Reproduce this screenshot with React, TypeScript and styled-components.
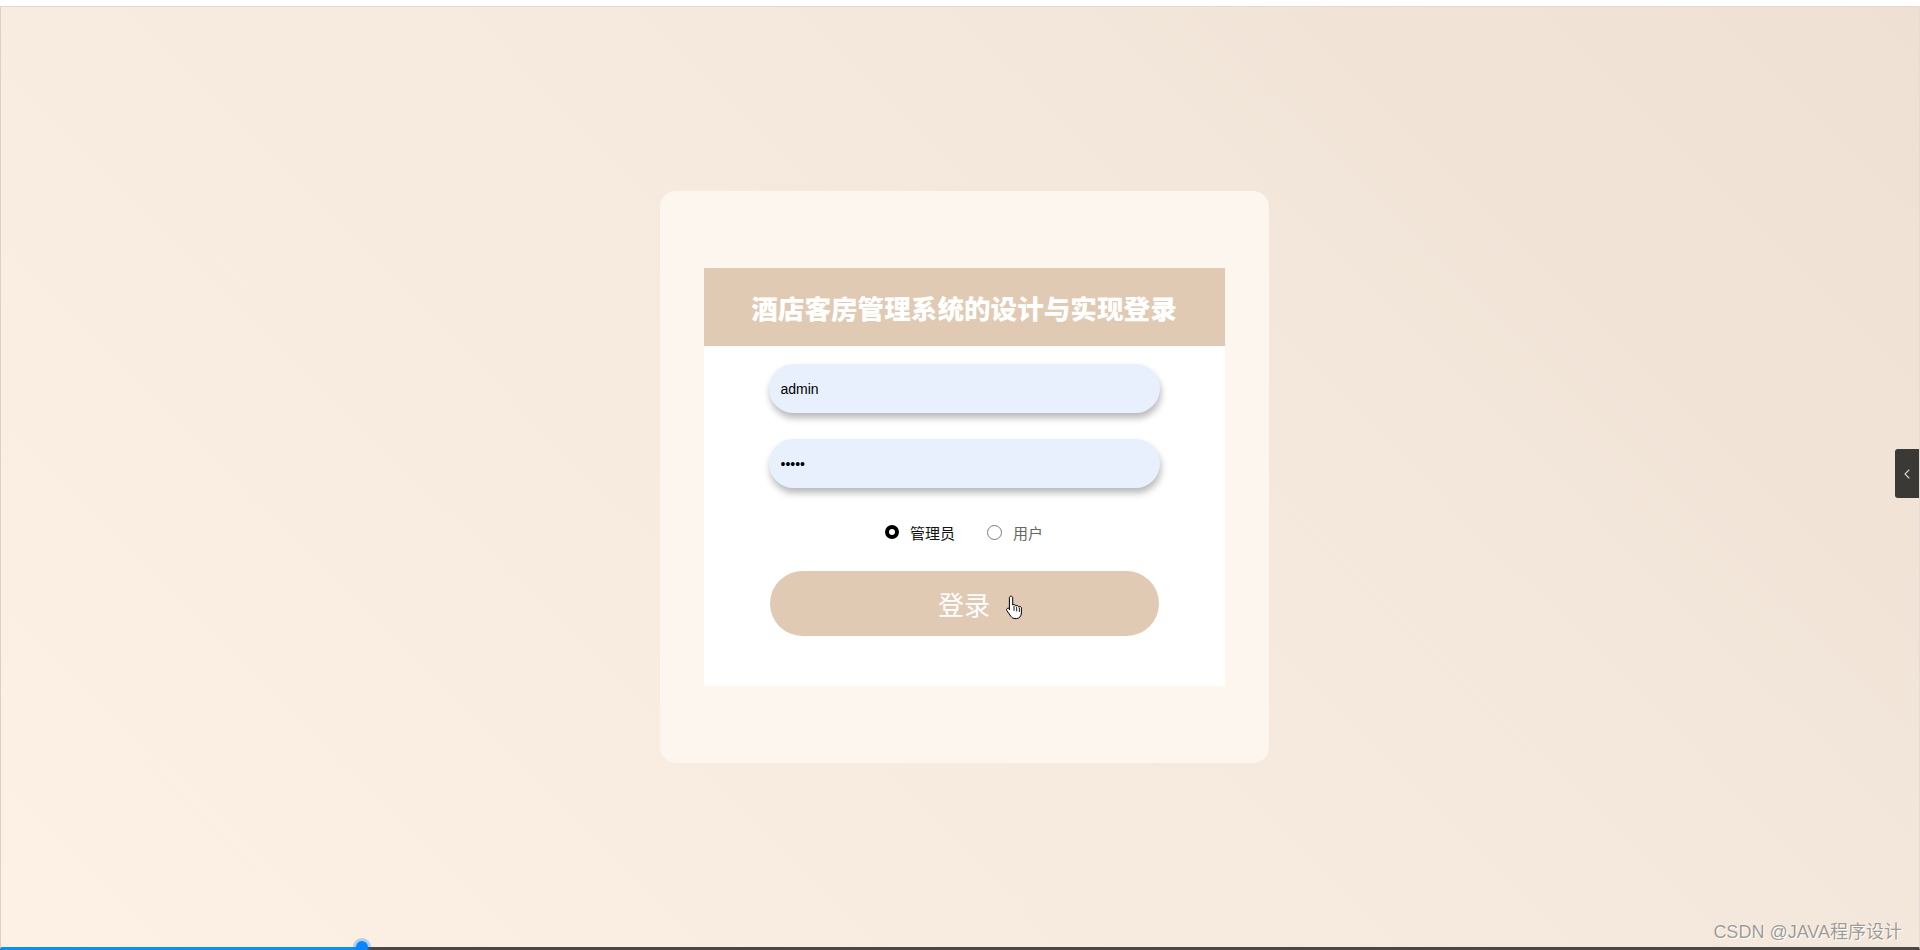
import React from "react";
import styled, { createGlobalStyle } from "styled-components";
import { ChevronLeft } from "lucide-react";

const GlobalStyle = createGlobalStyle`
  html, body {
    margin: 0;
    padding: 0;
    height: 100%;
    background: #ffffff;
    font-family: "Liberation Sans", "Noto Sans CJK SC", sans-serif;
  }
  * { box-sizing: border-box; }
`;

const Page = styled.div`
  height: 950px;
  display: flex;
  flex-direction: column;
  overflow: hidden;
`;

const TopStrip = styled.div`
  height: 7px;
  flex: none;
  background: #ffffff;
  border-bottom: 1px solid #dedad6;
`;

const Stage = styled.div`
  position: relative;
  flex: 1;
  display: flex;
  align-items: center;
  justify-content: center;
  border-left: 1px solid #d9d2ca;
  border-right: 1px solid #e4ddd5;
  border-bottom: 3px solid #4a4846;
  background: linear-gradient(45deg, #fdf1e5 0%, #f6eadf 50%, #eee0d2 100%);
`;

const Card = styled.div`
  width: 609px;
  height: 572px;
  margin-left: 8px;
  border-radius: 16px;
  background: #fdf6ef;
  display: flex;
  align-items: center;
  justify-content: center;
`;

const Panel = styled.div`
  width: 521px;
  background: #ffffff;
  display: flex;
  flex-direction: column;
  padding-bottom: 50px;
`;

const Header = styled.div`
  height: 78px;
  background: #e0cab3;
  display: flex;
  align-items: center;
  justify-content: center;
`;

const Title = styled.h1`
  margin: 0;
  font-family: "Noto Sans CJK SC", "Liberation Sans", sans-serif;
  font-size: 26.6px;
  font-weight: 900;
  color: #ffffff;
  letter-spacing: 0;
`;

const Form = styled.form`
  display: flex;
  flex-direction: column;
  align-items: center;
  padding-top: 18px;
  margin: 0;
`;

const Input = styled.input<{ $gap?: number }>`
  width: 391px;
  height: 49px;
  margin-top: ${(p) => p.$gap ?? 0}px;
  border: none;
  outline: none;
  border-radius: 25px;
  background: #e8f0fe;
  box-shadow: 1px 5px 7px rgba(0, 0, 0, 0.28);
  padding: 0 12px;
  font-family: "Liberation Sans", sans-serif;
  font-size: 14px;
  color: #000000;
`;

const RadioRow = styled.div`
  height: 20px;
  margin-top: 34px;
  display: flex;
  align-items: center;
  gap: 32px;
`;

const RadioLabel = styled.label<{ $active?: boolean }>`
  display: flex;
  align-items: center;
  gap: 11px;
  font-family: "Noto Sans CJK SC", sans-serif;
  font-size: 15px;
  color: ${(p) => (p.$active ? "#111111" : "#666666")};
`;

const RadioDot = styled.span<{ $checked?: boolean }>`
  width: ${(p) => (p.$checked ? 14 : 15)}px;
  height: ${(p) => (p.$checked ? 14 : 15)}px;
  border-radius: 50%;
  background: #ffffff;
  border: ${(p) => (p.$checked ? "4.5px solid #000000" : "1px solid #7a7a7a")};
  flex: none;
`;

const SubmitButton = styled.button`
  position: relative;
  width: 389px;
  height: 65px;
  margin-top: 29px;
  border: none;
  border-radius: 33px;
  background: #e0cab3;
  color: #ffffff;
  font-family: "Noto Sans CJK SC", sans-serif;
  font-size: 26px;
  font-weight: 400;
  padding: 0;
  cursor: pointer;
`;

const Cursor = styled.svg`
  position: absolute;
  left: 235px;
  top: 24px;
  width: 18px;
  height: 25px;
`;

const Watermark = styled.div`
  position: absolute;
  right: 17px;
  bottom: 4px;
  font-family: "Liberation Sans", "Noto Sans CJK SC", sans-serif;
  font-size: 18px;
  color: #a09a94;
  text-shadow: 0 0 1px #ffffff, 1px 1px 0 #ffffff;
`;

const SideTab = styled.div`
  position: absolute;
  right: 0;
  top: 442px;
  width: 24px;
  height: 49px;
  background: #3b3935;
  border-radius: 3px 0 0 3px;
  display: flex;
  align-items: center;
  justify-content: center;
  color: #d4d4d4;
`;

const Progress = styled.div`
  position: absolute;
  left: 0;
  bottom: -3px;
  width: 361px;
  height: 3px;
  background: #0e8ff2;
`;

const ProgressKnob = styled.div`
  position: absolute;
  left: 355px;
  bottom: -6px;
  width: 12px;
  height: 12px;
  border-radius: 50%;
  background: #0a84ff;
  box-shadow: 0 0 0 3px rgba(10, 132, 255, 0.3);
`;

const HandCursor = () => (
  <Cursor viewBox="0 0 18 25">
    <path
      d="M6 1.2c1 0 1.7.8 1.7 1.7V10c.3-.4.8-.6 1.3-.6 1 0 1.7.7 1.7 1.6.3-.4.8-.6 1.3-.6.9 0 1.6.7 1.6 1.6.3-.3.8-.5 1.2-.5.9 0 1.6.7 1.6 1.6V18c0 3-2.2 5.6-5 5.6H10c-1.6 0-3-.8-3.9-2L1.9 15.7c-.5-.7-.4-1.7.3-2.2.7-.5 1.6-.4 2.1.2l.1 1V2.9C4.4 2 5 1.2 6 1.2Z"
      fill="#ffffff"
      stroke="#000000"
      strokeWidth="1"
      strokeLinejoin="round"
    />
    <path d="M9 11v4.5M11.7 12v4M14.4 13v3.5" stroke="#000000" strokeWidth="0.9" fill="none" strokeLinecap="round" />
  </Cursor>
);

export default function App() {
  return (
    <Page>
      <GlobalStyle />
      <TopStrip />
      <Stage>
        <Card>
          <Panel>
            <Header>
              <Title>酒店客房管理系统的设计与实现登录</Title>
            </Header>
            <Form onSubmit={(e) => e.preventDefault()}>
              <Input type="text" defaultValue="admin" />
              <Input type="password" defaultValue="admin" $gap={26} />
              <RadioRow>
                <RadioLabel $active>
                  <RadioDot $checked />
                  管理员
                </RadioLabel>
                <RadioLabel>
                  <RadioDot />
                  用户
                </RadioLabel>
              </RadioRow>
              <SubmitButton type="submit">
                登录
                <HandCursor />
              </SubmitButton>
            </Form>
          </Panel>
        </Card>
        <SideTab>
          <ChevronLeft size={16} strokeWidth={1.6} />
        </SideTab>
        <Watermark>CSDN @JAVA程序设计</Watermark>
        <Progress />
        <ProgressKnob />
      </Stage>
    </Page>
  );
}
